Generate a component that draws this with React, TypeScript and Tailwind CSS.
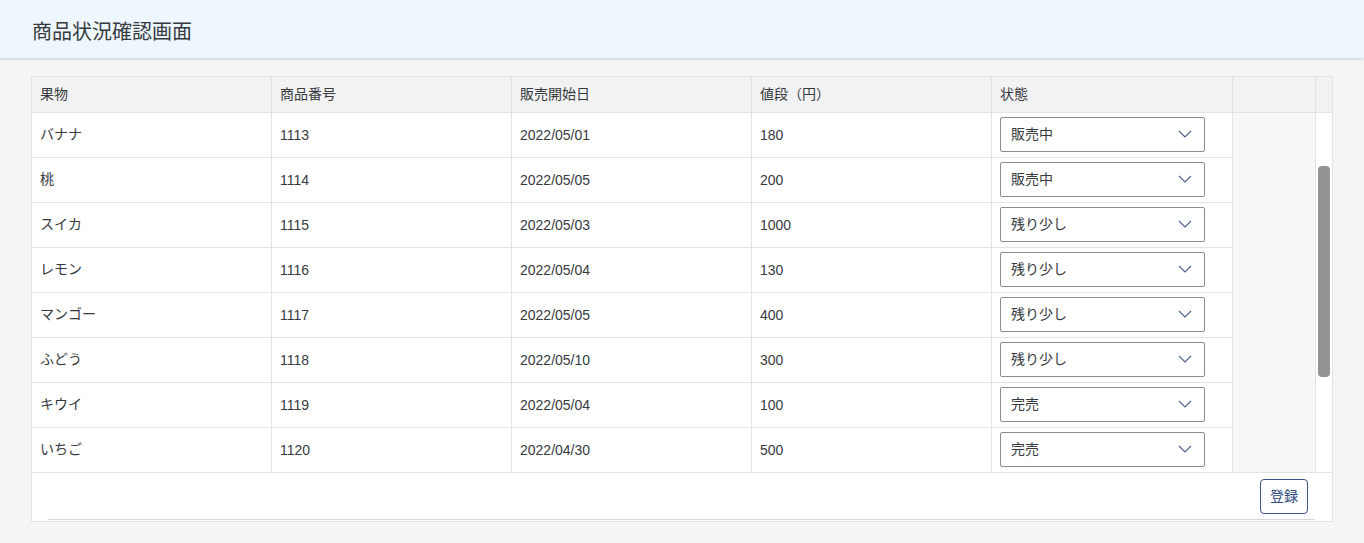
import React from 'react';

const rows = [
  { fruit: 'バナナ', code: '1113', date: '2022/05/01', price: '180', status: '販売中' },
  { fruit: '桃', code: '1114', date: '2022/05/05', price: '200', status: '販売中' },
  { fruit: 'スイカ', code: '1115', date: '2022/05/03', price: '1000', status: '残り少し' },
  { fruit: 'レモン', code: '1116', date: '2022/05/04', price: '130', status: '残り少し' },
  { fruit: 'マンゴー', code: '1117', date: '2022/05/05', price: '400', status: '残り少し' },
  { fruit: 'ふどう', code: '1118', date: '2022/05/10', price: '300', status: '残り少し' },
  { fruit: 'キウイ', code: '1119', date: '2022/05/04', price: '100', status: '完売' },
  { fruit: 'いちご', code: '1120', date: '2022/04/30', price: '500', status: '完売' },
];

const headers = ['果物', '商品番号', '販売開始日', '値段（円）', '状態'];

const StatusSelect = ({ value }: { value: string }) => (
  <div className="w-[205px] h-[35px] border border-[#8c8c8c] rounded-[2px] bg-white flex items-center justify-between pl-[10px] pr-[12px]">
    <span>{value}</span>
    <svg width="14" height="8" viewBox="0 0 14 8" fill="none">
      <polyline points="1,1 7,7 13,1" stroke="#4a5f88" strokeWidth="1.1" />
    </svg>
  </div>
);

export default function App() {
  return (
    <div className="min-h-[543px] bg-[#f5f5f5] text-[#363a3e] font-['Liberation_Sans','Noto_Sans_CJK_JP',sans-serif]">
      {/* Page header */}
      <header className="h-[58px] bg-[#eef6fe] shadow-[0_1px_3px_rgba(0,0,0,0.18)] flex items-center pl-[32px] pt-[5px]">
        <h1 className="text-[20px] leading-none">商品状況確認画面</h1>
      </header>

      <div className="pt-[18px] pl-[31px]">
        <div className="w-[1302px] border border-[#e3e3e3] bg-white text-[14px]">
          <div className="flex">
            {/* Data columns */}
            <div className="w-[1200px]">
              <div className="grid grid-cols-[239px_240px_240px_240px_241px] h-[36px] bg-[#f2f2f2] border-b border-[#e3e3e3]">
                {headers.map((h, i) => (
                  <div key={h} className={`flex items-center px-[8px] ${i > 0 ? 'border-l border-[#e3e3e3]' : ''}`}>
                    {h}
                  </div>
                ))}
              </div>
              {rows.map((r) => (
                <div key={r.code} className="grid grid-cols-[239px_240px_240px_240px_241px] h-[45px] border-b border-[#e3e3e3]">
                  <div className="flex items-center px-[8px] pb-[2px]">{r.fruit}</div>
                  <div className="flex items-center px-[8px] pt-[1px] border-l border-[#e3e3e3]">{r.code}</div>
                  <div className="flex items-center px-[8px] pt-[1px] border-l border-[#e3e3e3]">{r.date}</div>
                  <div className="flex items-center px-[8px] pt-[1px] border-l border-[#e3e3e3]">{r.price}</div>
                  <div className="flex items-center px-[8px] pb-[2px] border-l border-[#e3e3e3]">
                    <StatusSelect value={r.status} />
                  </div>
                </div>
              ))}
            </div>

            {/* Empty trailing column */}
            <div className="w-[83px] border-l border-[#e3e3e3] flex flex-col">
              <div className="h-[36px] bg-[#f2f2f2] border-b border-[#e3e3e3]" />
              <div className="flex-1 bg-[#f7f7f7] border-b border-[#e3e3e3]" />
            </div>

            {/* Vertical scrollbar */}
            <div className="w-[17px] border-l border-[#e3e3e3] flex flex-col">
              <div className="h-[36px] bg-[#f2f2f2] border-b border-[#e3e3e3]" />
              <div className="flex-1 bg-white border-b border-[#e3e3e3] pt-[53px] pl-[2px]">
                <div className="w-[12px] h-[211px] rounded-[4px] bg-[#949494]" />
              </div>
            </div>
          </div>

          {/* Footer */}
          <div className="h-[48px] flex flex-col">
            <div className="flex justify-end pt-[6px] pr-[24px]">
              <button className="w-[48px] h-[35px] border border-[#3d5488] rounded-[4px] text-[#2f4a7d] text-[14px] bg-white">
                登録
              </button>
            </div>
            <div className="mt-auto ml-[16px] w-[1267px] h-[1px] mb-[1px] bg-[#d6d6d6]" />
          </div>
        </div>
      </div>
    </div>
  );
}
